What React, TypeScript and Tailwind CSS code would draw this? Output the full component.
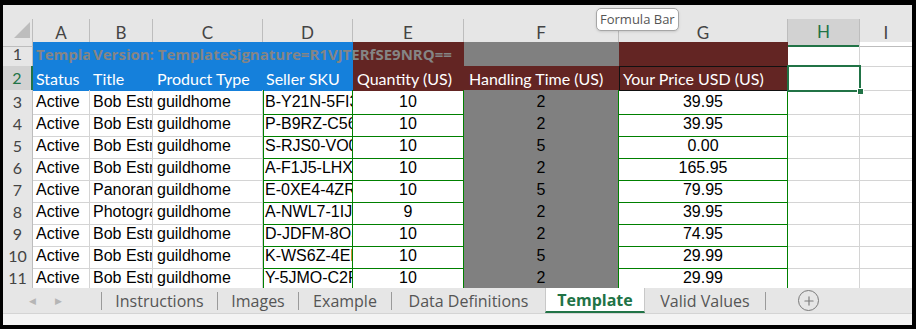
import { Plus } from 'lucide-react'

const GRID =
  'grid grid-cols-[30px_57px_63px_110px_90px_111px_155px_169px_72px_52px]'

const rows = [
  { n: 3, title: 'Bob Estrin Photography', sku: 'B-Y21N-5FI3', qty: '10', ht: '2', price: '39.95' },
  { n: 4, title: 'Bob Estrin Photography', sku: 'P-B9RZ-C56X', qty: '10', ht: '2', price: '39.95' },
  { n: 5, title: 'Bob Estrin Photography', sku: 'S-RJS0-VO0C', qty: '10', ht: '5', price: '0.00' },
  { n: 6, title: 'Bob Estrin Photography', sku: 'A-F1J5-LHXQ', qty: '10', ht: '2', price: '165.95' },
  { n: 7, title: 'Panoramic Print', sku: 'E-0XE4-4ZRT', qty: '10', ht: '5', price: '79.95' },
  { n: 8, title: 'Photograph Print', sku: 'A-NWL7-1IJ9', qty: '9', ht: '2', price: '39.95' },
  { n: 9, title: 'Bob Estrin Photography', sku: 'D-JDFM-8O3T', qty: '10', ht: '2', price: '74.95' },
  { n: 10, title: 'Bob Estrin Photography', sku: 'K-WS6Z-4EDU', qty: '10', ht: '5', price: '29.99' },
  { n: 11, title: 'Bob Estrin Photography', sku: 'Y-5JMO-C2FP', qty: '10', ht: '2', price: '29.99' },
]

const tabs = [
  { name: 'Instructions', w: 'w-[115px]' },
  { name: 'Images', w: 'w-[80px]' },
  { name: 'Example', w: 'w-[92px]' },
  { name: 'Data Definitions', w: 'w-[153px]' },
]

export default function App() {
  const grid = 'border-r border-b border-[#d4d4d4]'
  const rowHead =
    "flex items-center justify-center border-r border-b border-[#bdbdbd] bg-[#e6e6e6] font-['Lato'] text-[16px] text-[#444]"
  const text = "flex items-center overflow-hidden whitespace-nowrap font-['Liberation_Sans'] text-[16px] text-black"
  const green = 'border-r border-b border-[#008000]'
  const sig = "font-['Open_Sans'] text-[15px] font-bold text-[#858585]"

  return (
    <div className="relative h-[329px] w-[916px] overflow-hidden bg-black pb-[4px] pl-[3px] pr-[4px] pt-[5px]">
      <div className="flex h-full flex-col bg-white">
        {/* formula bar remains */}
        <div className="h-[14px] bg-[#e6e6e6]" />

        {/* column headers */}
        <div className={`${GRID} h-[23px] bg-[#e6e6e6] font-['Lato'] text-[17px] text-[#444]`}>
          <div className="relative border-r border-b border-[#bdbdbd]">
            <svg className="absolute left-[11px] top-[3px]" width="16" height="16" viewBox="0 0 16 16">
              <polygon points="0,16 16,16 16,0" fill="#bdbdbd" />
            </svg>
          </div>
          {['A', 'B', 'C', 'D', 'E', 'F', 'G'].map((c) => (
            <div key={c} className="flex items-center justify-center border-r border-b border-[#bdbdbd]">
              {c}
            </div>
          ))}
          <div className="flex items-center justify-center border-r border-b-2 border-r-[#bdbdbd] border-b-[#217346] bg-[#d2d2d2] text-[#217346]">
            H
          </div>
          <div className="flex items-center justify-center border-b border-[#bdbdbd]">I</div>
        </div>

        {/* row 1 */}
        <div className={`${GRID} h-[24px]`}>
          <div className={rowHead}>1</div>
          <div className={`flex items-center overflow-hidden whitespace-nowrap bg-[#1580db] pl-[3px] ${sig}`}>
            TemplateType=fptcustom
          </div>
          <div className={`relative flex items-center whitespace-nowrap bg-[#1580db] pl-[3px] ${sig}`}>
            <span className="relative z-10">Version: TemplateSignature=R1VJTERfSE9NRQ==</span>
          </div>
          <div className="bg-[#1580db]" />
          <div className="bg-[#1580db]" />
          <div className="bg-[#632523]" />
          <div className="bg-[#808080]" />
          <div className="bg-[#632523]" />
          <div className={grid} />
          <div className="border-b border-[#d4d4d4]" />
        </div>

        {/* row 2 */}
        <div className={`${GRID} h-[24px] font-['Lato'] text-[16px] text-white`}>
          <div className="flex items-center justify-center border-r-2 border-b border-r-[#217346] border-b-[#bdbdbd] bg-[#d2d2d2] text-[#217346]">
            2
          </div>
          <div className="flex items-center overflow-hidden whitespace-nowrap bg-[#1580db] pl-[3px]">Status</div>
          <div className="flex items-center overflow-hidden whitespace-nowrap bg-[#1580db] pl-[3px]">Title</div>
          <div className="flex items-center overflow-hidden whitespace-nowrap bg-[#1580db] pl-[4px]">Product Type</div>
          <div className="flex items-center overflow-hidden whitespace-nowrap bg-[#1580db] pl-[3px]">Seller SKU</div>
          <div className="flex items-center overflow-hidden whitespace-nowrap bg-[#632523] pl-[4px]">Quantity (US)</div>
          <div className="flex items-center overflow-hidden whitespace-nowrap bg-[#632523] pl-[5px]">Handling Time (US)</div>
          <div className="flex items-center overflow-hidden whitespace-nowrap border border-[#111] bg-[#632523] pl-[3px]">
            Your Price USD (US)
          </div>
          <div className="relative">
            <div className="absolute -inset-x-[1px] -inset-y-[1px] z-10 border-2 border-[#217346]" />
            <div className="absolute -bottom-[4px] -right-[4px] z-20 h-[7px] w-[7px] border border-white bg-[#217346]" />
          </div>
          <div className="border-b border-[#d4d4d4]" />
        </div>

        {/* data rows */}
        {rows.map((r) => (
          <div key={r.n} className={`${GRID} h-[22px]`}>
            <div className={rowHead}>{r.n}</div>
            <div className={`${text} ${grid} pl-[3px]`}>Active</div>
            <div className={`${text} ${grid} pl-[3px]`}>{r.title}</div>
            <div className={`${text} ${grid} pl-[4px]`}>guildhome</div>
            <div className={`${text} ${green} border-l pl-[1px]`}>{r.sku}</div>
            <div className={`${text} ${green} justify-center`}>{r.qty}</div>
            <div className={`${text} justify-center border-r border-b border-r-[#008000] border-b-[#808080] bg-[#808080]`}>
              {r.ht}
            </div>
            <div className={`${text} ${green} justify-center`}>{r.price}</div>
            <div className={grid} />
            <div className="border-b border-[#d4d4d4]" />
          </div>
        ))}

        {/* sheet tabs */}
        <div className="flex h-[25px] items-center bg-[#e6e6e6] font-['Open_Sans'] text-[16px] text-[#555]">
          <div className="flex h-full w-[98px] items-center gap-[19px] pl-[26px] text-[9px] text-[#b5b5b5]">
            <span>◀</span>
            <span>▶</span>
          </div>
          {tabs.map((t) => (
            <div key={t.name} className="flex h-full items-center">
              <div className="h-[18px] w-px bg-[#9a9a9a]" />
              <div className={`${t.w} flex justify-center whitespace-nowrap`}>{t.name}</div>
            </div>
          ))}
          <div className="flex h-full w-[100px] items-center justify-center border-x border-b-2 border-x-[#c8c8c8] border-b-[#217346] bg-white font-bold text-[#217346]">
            Template
          </div>
          <div className="flex h-full w-[120px] items-center justify-center whitespace-nowrap">Valid Values</div>
          <div className="h-[18px] w-px bg-[#9a9a9a]" />
          <div className="ml-[32px] flex h-[21px] w-[21px] items-center justify-center rounded-full border-[1.5px] border-[#7a7a7a]">
            <Plus size={14} strokeWidth={2} color="#7a7a7a" />
          </div>
        </div>

        <div className="flex-1 border-t border-[#d4d4d4] bg-[#f3f3f3]" />
      </div>

      {/* tooltip */}
      <div className="absolute left-[596px] top-[8px] z-30 flex h-[23px] items-center rounded-[5px] border border-[#a6a6a6] bg-white px-[3px] font-['Open_Sans'] text-[13px] text-[#555] shadow-sm">
        Formula Bar
      </div>
    </div>
  )
}
